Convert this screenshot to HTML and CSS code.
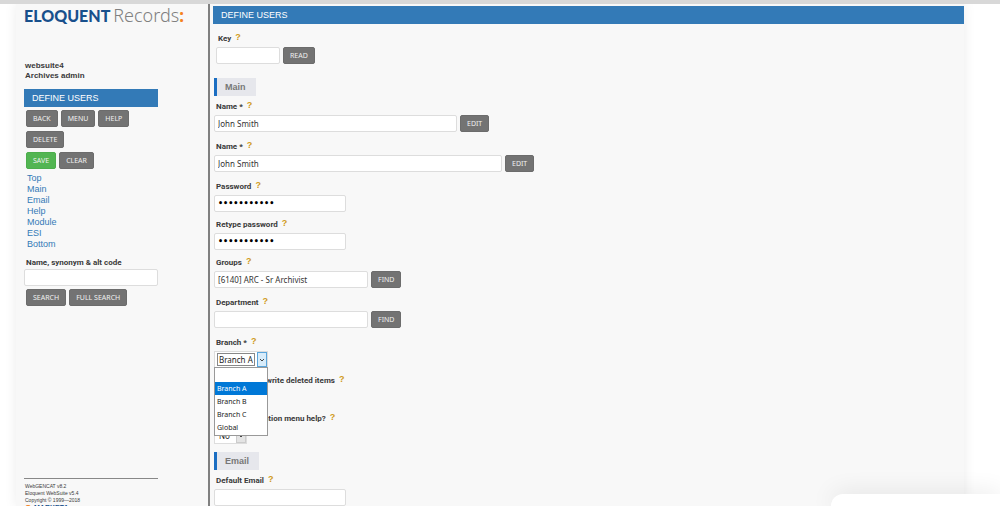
FILE: index.html
```html
<!DOCTYPE html>
<html lang="en">
<head>
  <meta charset="UTF-8" />
  <meta name="viewport" content="width=device-width, initial-scale=1" />
  <title>Define Users - Eloquent Records</title>
  <link rel="stylesheet" href="styles.css">
</head>
<body>

  <div class="app">

    <!-- Sidebar -->
    <aside class="sidebar">
      <div class="logo"><b>ELOQUENT</b><span>Records</span><i>:</i></div>

      <div class="account">
        <div>websuite4</div>
        <div>Archives admin</div>
      </div>

      <h2 class="bar">DEFINE USERS</h2>

      <div class="btn-row">
        <button type="button" class="btn">BACK</button>
        <button type="button" class="btn">MENU</button>
        <button type="button" class="btn">HELP</button>
      </div>
      <div class="btn-row">
        <button type="button" class="btn">DELETE</button>
      </div>
      <div class="btn-row">
        <button type="button" class="btn btn-save">SAVE</button>
        <button type="button" class="btn">CLEAR</button>
      </div>

      <nav class="links">
        <a href="#top">Top</a>
        <a href="#main">Main</a>
        <a href="#email">Email</a>
        <a href="#help">Help</a>
        <a href="#module">Module</a>
        <a href="#esi">ESI</a>
        <a href="#bottom">Bottom</a>
      </nav>

      <form class="search">
        <label for="search">Name, synonym &amp; alt code</label>
        <input type="text" id="search" />
        <div class="btn-row">
          <button type="button" class="btn">SEARCH</button>
          <button type="button" class="btn">FULL SEARCH</button>
        </div>
      </form>

      <footer class="footer">
        <div>WebGENCAT v8.2</div>
        <div>Eloquent WebSuite v5.4</div>
        <div>Copyright © 1999—2018</div>
        <div class="vendor"><span class="vendor-dot"></span>MARKETA</div>
      </footer>
    </aside>

    <!-- User form -->
    <main class="content" id="top">
      <h1 class="bar">DEFINE USERS</h1>

      <form class="form">
        <div class="field field-key">
          <div class="label-row"><label for="key">Key</label><a href="#help" class="hint">?</a></div>
          <div class="control">
            <input type="text" id="key" class="w-xs" />
            <button type="button" class="btn">READ</button>
          </div>
        </div>

        <h3 class="section" id="main">Main</h3>

        <div class="field with-btn">
          <div class="label-row"><label for="name">Name *</label><a href="#help" class="hint">?</a></div>
          <div class="control">
            <input type="text" id="name" class="w-lg" value="John Smith" />
            <button type="button" class="btn">EDIT</button>
          </div>
        </div>

        <div class="field with-btn">
          <div class="label-row"><label for="fullName">Name *</label><a href="#help" class="hint">?</a></div>
          <div class="control">
            <input type="text" id="fullName" class="w-xl" value="John Smith" />
            <button type="button" class="btn">EDIT</button>
          </div>
        </div>

        <div class="field">
          <div class="label-row"><label for="password">Password</label><a href="#help" class="hint">?</a></div>
          <div class="control"><input type="password" id="password" class="w-sm" value="archives123" /></div>
        </div>

        <div class="field">
          <div class="label-row"><label for="retype">Retype password</label><a href="#help" class="hint">?</a></div>
          <div class="control"><input type="password" id="retype" class="w-sm" value="archives123" /></div>
        </div>

        <div class="field with-btn">
          <div class="label-row"><label for="groups">Groups</label><a href="#help" class="hint">?</a></div>
          <div class="control">
            <input type="text" id="groups" class="w-md" value="[6140] ARC - Sr Archivist" />
            <button type="button" class="btn">FIND</button>
          </div>
        </div>

        <div class="field with-btn">
          <div class="label-row"><label for="department">Department</label><a href="#help" class="hint">?</a></div>
          <div class="control">
            <input type="text" id="department" class="w-md" />
            <button type="button" class="btn">FIND</button>
          </div>
        </div>

        <div class="field">
          <div class="label-row"><label for="branch">Branch *</label><a href="#help" class="hint">?</a></div>
          <div class="control">
            <div class="select open">
              <select id="branch">
                <option></option>
                <option selected>Branch A</option>
                <option>Branch B</option>
                <option>Branch C</option>
                <option>Global</option>
              </select>
              <span class="arrow"><svg viewBox="0 0 6 4"><path d="M1 1l2 2 2-2" /></svg></span>
              <ul class="options">
                <li></li>
                <li class="selected">Branch A</li>
                <li>Branch B</li>
                <li>Branch C</li>
                <li>Global</li>
              </ul>
            </div>
          </div>
        </div>

        <div class="field">
          <div class="label-row"><label for="deleted">Allow to read/write deleted items</label><a href="#help" class="hint">?</a></div>
          <div class="control">
            <div class="select">
              <select id="deleted"><option>No</option><option>Yes</option></select>
              <span class="arrow"><svg viewBox="0 0 6 4"><path d="M1 1l2 2 2-2" /></svg></span>
            </div>
          </div>
        </div>

        <div class="field">
          <div class="label-row"><label for="menuHelp">Disable navigation menu help?</label><a href="#help" class="hint">?</a></div>
          <div class="control">
            <div class="select">
              <select id="menuHelp"><option>No</option><option>Yes</option></select>
              <span class="arrow"><svg viewBox="0 0 6 4"><path d="M1 1l2 2 2-2" /></svg></span>
            </div>
          </div>
        </div>

        <h3 class="section" id="email">Email</h3>

        <div class="field">
          <div class="label-row"><label for="defaultEmail">Default Email</label><a href="#help" class="hint">?</a></div>
          <div class="control"><input type="text" id="defaultEmail" class="w-sm" /></div>
        </div>
      </form>
    </main>

  </div>

  <div class="popup"></div>

</body>
</html>
```

FILE: styles.css
```css
* {
  box-sizing: border-box;
}

body {
  margin: 0;
  height: 100vh;
  overflow: hidden;
  background: #fff;
  border-top: 4px solid #d8d8d8;
  font-family: "Liberation Sans", Arial, sans-serif;
  font-size: 8px;
  color: #3a3a3a;
}

.app {
  display: flex;
  height: 100%;
  margin: 0 36px 0 16px;
  background: #f8f8f8;
  box-shadow: 0 0 12px rgba(0, 0, 0, 0.08);
}

/* Sidebar */
.sidebar {
  width: 194px;
  padding: 0 50px 0 8px;
  border-right: 2px solid #808080;
  flex: none;
}

.logo {
  display: flex;
  align-items: baseline;
  height: 57px;
  line-height: 22px;
  font-size: 17px;
  white-space: nowrap;
}

.logo b {
  font-family: Lato, sans-serif;
  font-size: 16px;
  font-weight: 900;
  color: #18508c;
}

.logo span {
  margin-left: 3px;
  font-family: "Noto Sans", sans-serif;
  font-size: 18px;
  font-weight: 300;
  color: #808080;
}

.logo i {
  font-family: "Noto Sans", sans-serif;
  font-style: normal;
  font-weight: 700;
  color: #f58220;
}

.account {
  height: 28px;
  padding-left: 1px;
  line-height: 10px;
  font-weight: bold;
}

.bar {
  margin: 0;
  padding: 0 8px;
  height: 18px;
  line-height: 19px;
  font-size: 9px;
  font-weight: normal;
  color: #fff;
  background: #337ab7;
}

.btn-row {
  display: flex;
  gap: 3px;
  margin: 3px 0 4px 2px;
}

.btn {
  height: 17px;
  padding: 0 6px;
  border: 1px solid #6c6c6c;
  border-radius: 2px;
  background: #737373;
  color: #f0f0f0;
  font-family: "Noto Sans", sans-serif;
  font-size: 7px;
  line-height: 15px;
}

.btn-save {
  background: #52b552;
  border-color: #4cae4c;
}

.links {
  display: flex;
  flex-direction: column;
  align-items: flex-start;
  padding: 0 3px;
  font-size: 9px;
  line-height: 11px;
}

.links a {
  color: #337ab7;
  text-decoration: none;
}

.search label {
  display: block;
  margin-top: 7px;
  padding-left: 2px;
  line-height: 12px;
  font-family: Roboto, sans-serif;
  font-weight: bold;
}

.footer {
  margin-top: 172px;
  padding: 4px 0 0 1px;
  border-top: 1px solid #888;
  font-size: 5px;
  line-height: 7px;
  white-space: nowrap;
}

.vendor {
  display: flex;
  align-items: center;
  gap: 3px;
  font-size: 7px;
  font-weight: bold;
  color: #18508c;
}

.vendor-dot {
  width: 6px;
  height: 6px;
  border-radius: 50%;
  background: #f58220;
}

/* Form */
.content {
  flex: 1;
  min-width: 0;
  padding: 2px 0 0 3px;
}

.form {
  padding: 5px 0 0 1px;
}

.field {
  margin-bottom: 3px;
}

.with-btn {
  margin-bottom: 5px;
}

.field-key {
  margin: 0 0 14px 2px;
}

.label-row {
  display: flex;
  gap: 4px;
  height: 18px;
  padding-left: 2px;
  line-height: 20px;
  font-family: Roboto, sans-serif;
  font-weight: bold;
}

.hint {
  font-family: "Liberation Sans", Arial, sans-serif;
  font-size: 9px;
  line-height: 17px;
  color: #d09a20;
  text-decoration: none;
}

.control {
  display: flex;
  gap: 3px;
}

input {
  height: 17px;
  padding: 0 3px;
  border: 1px solid #ddd;
  border-radius: 2px;
  background: #fff;
  color: #333;
  font-family: "Noto Sans", sans-serif;
  font-size: 8px;
}

input[type="password"] {
  font-family: "DejaVu Sans", sans-serif;
  font-weight: bold;
  color: #000;
}

.search input {
  width: 100%;
}

.w-xs {
  width: 64px;
}

.w-sm {
  width: 132px;
}

.w-md {
  width: 154px;
}

.w-lg {
  width: 243px;
}

.w-xl {
  width: 288px;
}

.section {
  width: fit-content;
  height: 18px;
  margin: 8px 0 1px;
  padding: 0 10px 0 8px;
  border-left: 3px solid #1b6ec2;
  background: #e6e7ec;
  color: #777;
  font-size: 9px;
  line-height: 18px;
}

/* Drop-downs */
.select {
  position: relative;
  display: flex;
  align-items: center;
  height: 17px;
  padding-left: 2px;
  border: 1px solid #ddd;
  background: #fff;
}

.select select {
  appearance: none;
  height: 13px;
  margin-right: 2px;
  padding: 0 1px;
  border: 1px solid transparent;
  background: #fff;
  color: #222;
  font-family: "Noto Sans", sans-serif;
  font-size: 8px;
}

.select.open select {
  border-color: #888;
}

.arrow {
  display: flex;
  align-items: center;
  justify-content: center;
  width: 10px;
  height: 15px;
  border: 1px solid #ccc;
  background: #e4e4e4;
}

.arrow svg {
  width: 6px;
  height: 4px;
  fill: none;
  stroke: #444;
}

.open .arrow {
  border-color: #5aa5dc;
  background: #d8ecfa;
}

.options {
  position: absolute;
  top: 100%;
  left: -1px;
  right: -1px;
  margin: 0;
  padding: 1px 0;
  list-style: none;
  border: 1px solid #999;
  background: #fff;
  color: #222;
  font-family: "Noto Sans", sans-serif;
  font-size: 7px;
  z-index: 1;
}

.options li {
  height: 13px;
  padding-left: 2px;
  line-height: 13px;
}

.options .selected {
  background: #0078d7;
  color: #fff;
}

.popup {
  position: fixed;
  right: 0;
  bottom: 0;
  width: 169px;
  height: 12px;
  border-top-left-radius: 14px;
  background: #fff;
  box-shadow: 0 0 24px rgba(0, 0, 0, 0.12);
}
```
